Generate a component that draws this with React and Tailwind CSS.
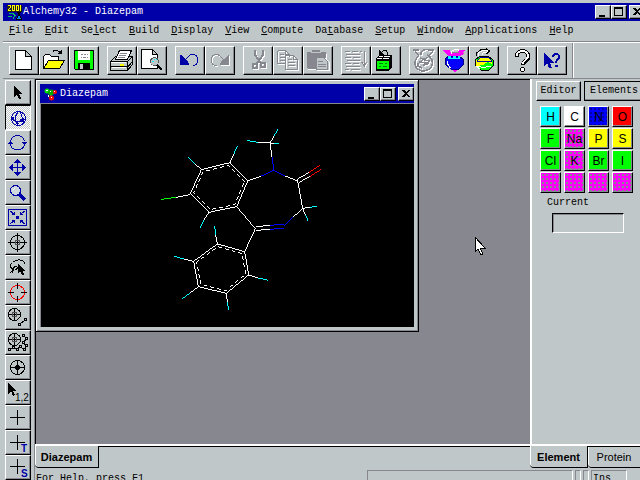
import React from "react";

const raised =
  "flex shrink-0 items-center justify-center border border-t-white border-l-white border-r-black border-b-black bg-[#c0c7c8] shadow-[inset_-1px_-1px_0_#878790]";

function Emboss({ children }) {
  return (
    <>
      <g transform="translate(1 1)" color="#fff">{children}</g>
      <g color="#878790">{children}</g>
    </>
  );
}

const C = "currentColor";
const flask = (
  <path
    d="M4 4h6M19 4h6M6 6l4 3M24 6l-4 3M12 9c-1-5 6-7 9-4M10 10c-4 3-5 7-3 11 3 4 7 5 11 3 5-1 6-6 5-10-1-2-2-4-5-5M11 12l4 1-4 3 6 1-3 3M18 11l-2 3 4 1-2 4M9 17v3l4 2"
    fill="none" stroke={C} strokeWidth="1.500"
  />
);

const bigIcons = {
  New: (
    <path d="M6.500 4.500h10l6 6v13h-16zM16.500 4.500v6h6" fill="#fff" stroke="#000" />
  ),
  Open: (
    <>
      <path d="M4.500 22.500v-12l2-2h4l2 2h7v4" fill="#fff" stroke="#000" />
      <path d="M4.500 22.500l5-8h16l-5 8z" fill="#ff0" stroke="#000" />
      <path d="M13.500 6.500c1-3 6-3 8 1" fill="none" stroke="#000" />
      <path d="M18 8h5V3z" />
    </>
  ),
  Save: (
    <>
      <path d="M5.500 4.500h19v19h-18l-1-1z" fill="#0f0" stroke="#000" />
      <path d="M9 5h12v9H9z" fill="#fff" />
      <path d="M12 8.500h2m1 0h2m1 0h1M12 11.500h1m1 0h3m1 0h1" stroke="#878790" />
      <path d="M9 17h12v7H9z" />
      <path d="M11 18h3v5h-3z" fill="#c0c7c8" />
    </>
  ),
  Print: (
    <>
      <path d="M3.500 15.500l5-5h17v8l-5 6h-17z" fill="#c0c7c8" stroke="#000" />
      <path d="M8.500 13.500l4-9h12l-4 9z" fill="#fff" stroke="#000" />
      <path d="M13 7.500h7m-8 2h7m-8 2h7" stroke="#878790" />
      <path d="M3.500 15.500h17v9M20.500 15.500l5-5M3.500 20.500h17M20.500 21.500l5-6" fill="none" stroke="#000" />
      <path d="M4 16h15v1H4zM5 21h14v1H5z" fill="#fff" />
      <path d="M13 18h4v2h-4z" fill="#ff0" />
    </>
  ),
  Preview: (
    <>
      <path d="M4.500 3.500h11l5 5v14h-16zM15.500 3.500v5h5" fill="#fff" stroke="#000" />
      <circle cx="17.500" cy="15.500" r="4" fill="#c0c7c8" stroke="#555" />
      <path d="M15 15h2v-2h1v1h-1v2h-2zM19 13h1v1h-1z" fill="#0ff" />
      <path d="M20 19l5 5" stroke="#000" strokeWidth="2" />
    </>
  ),
  Undo: (
    <>
      <path d="M10.500 13.500l4-4c4-3 8.500 0 8 5 0 3-2 5-5 5" fill="none" stroke="#0000a8" />
      <path d="M5 9h1l4 4 2 1 2 4v1H5z" fill="#0000a8" />
    </>
  ),
  Redo: (
    <Emboss>
      <path d="M18.500 13.500l-4-4c-4-3-8.500 0-8 5 0 3 2 5 5 5" fill="none" stroke={C} />
      <path d="M24 9h-1l-4 4-2 1-2 4v1h9z" fill={C} />
    </Emboss>
  ),
  Cut: (
    <Emboss>
      <path d="M12 4v5l6 8M20 4v5l-6 8" fill="none" stroke={C} strokeWidth="2" />
      <circle cx="12" cy="20" r="2.500" fill="none" stroke={C} strokeWidth="2" />
      <circle cx="20" cy="19" r="2.500" fill="none" stroke={C} strokeWidth="2" />
    </Emboss>
  ),
  Copy: (
    <Emboss>
      <path
        d="M4.500 4.500h8l4 4v2M4.500 4.500v13h8M12.500 4.500v4h4M7 8.500h4M7 11.500h5M7 14.500h5M12.500 9.500h8l4 4v10h-12zM20.500 9.500v4h4M15 13.500h4M15 16.500h7M15 19.500h7"
        fill="none" stroke={C}
      />
    </Emboss>
  ),
  Paste: (
    <>
      <path d="M23 8h1v5h-1zM5 23h8v1H5z" fill="#fff" />
      <path d="M4 6h5V4h8v2h6v8H13v9H5l-1-2z" fill="#878790" />
      <path d="M8 6.500h10" stroke="#c0c7c8" />
      <path d="M14.500 12.500h8l4 4v8h-12z" fill="none" stroke="#fff" />
      <path d="M13.500 11.500h7l4 4v8h-11z" fill="#c0c7c8" stroke="#878790" />
      <path d="M15 15.500h5M15 18.500h8M15 20.500h8" stroke="#878790" />
    </>
  ),
  Sequence: (
    <Emboss>
      <path d="M4 5.500h5m2 0h6m2 0h2M5 8.500h14M4 11.500h6m2 0h7M6 14.500h13M4 17.500h6m2 0h6M5 20.500h14M4 23.500h4m2 0h9M23.500 5v15m-3-4l3 4 2-4" fill="none" stroke={C} />
    </Emboss>
  ),
  Library: (
    <>
      <path d="M5 13l3-4h13v12l-3 4H5z" fill="#000" />
      <path d="M6 12h5v1H6zM12 12h6v1h-6zM8 10h4v1H8zM13 10h6v1h-6z" fill="#fff" />
      <path d="M5.500 14.500h13v9h-13z" fill="#0f0" stroke="#000" />
      <path d="M8 17.500h4m2 0h2M8 20.500h2m2 0h4" stroke="#008000" />
      <path d="M10.500 6.500c2-3 6-3 6 2" fill="none" stroke="#000" />
      <path d="M8 4v5h5z" />
    </>
  ),
  "Flask off": <Emboss>{flask}</Emboss>,
  "Blue flask": (
    <>
      <path d="M3 4h8v2h8V4h7l-3 3h3l-3 2-3 1H9zM14 24h4l-2 3z" fill="#f0f" />
      <path d="M6 13l4-3h10l4 3v6l-4 4-6 1-5-3-3-4z" fill="#00f" stroke="#000080" />
      <path d="M9 10h3v2h2v-2h3v2h2v-2h2v3H9z" fill="#0ff" />
      <path d="M12.500 8.500c-2-4 5-6 8-4M8.500 15v3l3 4" fill="none" stroke="#fff" />
      <path d="M13 6.500h7" stroke="#878790" />
    </>
  ),
  "Green flask": (
    <>
      <path d="M6 14l5-4h8l5 4v6l-4 4-6 1-5-3-3-4z" fill="#0f0" stroke="#000" />
      <path d="M7 14h16v4l-4-2-5 3-7 1z" fill="#ff0" />
      <path d="M8.500 14.500l3-3h8l3 3v1h-14z" fill="#ff0" stroke="#0000a8" />
      <path d="M9.500 10.500c-2-4 3-6 8-6.500l2 1.500-2 1h-3l-2 3M7 20l5 1h5l5-1M8 21l3 2" fill="none" stroke="#fff" />
      <path d="M7.500 10v-3l4-3 6-1 3 2-3 3" fill="none" stroke="#000" />
    </>
  ),
  Help: (
    <>
      <path d="M9.500 11c0-8 12-8 12 0 0 4-5.500 4-5.500 8" fill="none" stroke="#000" strokeWidth="4" />
      <path d="M9.500 10c0-6 11.500-7 11.500 0 0 4-5 4-5 8" fill="none" stroke="#fff" strokeWidth="2" />
      <circle cx="15.500" cy="23.500" r="2" fill="#fff" stroke="#000" />
    </>
  ),
  "Context help": (
    <>
      <path d="M7 7v13l3-3 2 5h3l-2-5h4z" fill="#0000a8" />
      <path d="M16 11c0-4 6-4 6 0 0 3-3 2-3 6" fill="none" stroke="#0000a8" strokeWidth="2" />
      <path d="M18 19h3v2h-3z" fill="#0000a8" />
    </>
  ),
};

const groups = [
  ["New", "Open", "Save"],
  ["Print", "Preview"],
  ["Undo", "Redo"],
  ["Cut", "Copy", "Paste"],
  ["Sequence", "Library"],
  ["Flask off", "Blue flask", "Green flask"],
  ["Help", "Context help"],
];

const B = "#0000a8";
const K = "#000";
const tools = [
  ["Select", <path d="M9 6v11l3-2 2 4h2v-1l-2-4h3z" />],
  ["Trackball", (
    <g fill="none" stroke={B}>
      <circle cx="13.500" cy="13.500" r="7" />
      <path d="M6.500 13.500c3 4 11 4 14 0M13.500 6.500c-4 4-4 10 0 14M14.500 6.500c3 3 3 8 2 10" />
      <path d="M6 12h2v2H6zM15 15l3-1v3zM11 16v2h2z" fill={B} />
    </g>
  )],
  ["Rotate", (
    <g fill="none" stroke={B}>
      <path d="M5.500 11.500c1-8 13-8 14 0M5.500 14.500c1 7 13 7 14 0" />
      <path d="M3 14l2.500-3 2.500 3zM17 12l2.500 3 2.500-3z" fill={B} stroke="none" />
    </g>
  )],
  ["Move", (
    <g>
      <path d="M12.500 5v15M5 12.500h15" stroke={B} />
      <path d="M9 8l3.500-4L16 8zM9 17l3.500 4 3.500-4zM8 9l-4 3.500L8 16zM17 9l4 3.500-4 3.500z" fill={B} />
    </g>
  )],
  ["Zoom", (
    <g stroke={B} fill="none">
      <circle cx="10.500" cy="10.500" r="5" fill="#cfd8dc" />
      <path d="M14 14l6 6" strokeWidth="3" />
      <path d="M8 10l2-2" stroke="#fff" />
    </g>
  )],
  ["Fit", (
    <g stroke={B} fill="none">
      <path d="M3.500 4.500h18v16h-18z" />
      <path d="M5 6l4 3M20 6l-4 3M5 19l4-3M20 19l-4-3" />
      <path d="M9.500 7v2.500H7M15.500 7v2.500H18M9.500 18v-2.500H7M15.500 18v-2.500H18" />
      <path d="M11 11h3v3h-3z" fill={B} stroke="none" />
    </g>
  )],
  ["Center", (
    <g stroke={K} fill="none">
      <circle cx="12.500" cy="12.500" r="7" />
      <path d="M12.500 3v19M3 12.500h19" />
      <path d="M10.500 10.500h4v4h-4z" stroke="#555" />
    </g>
  )],
  ["Lasso", (
    <g stroke={K} fill="none">
      <path d="M9.500 14.500c-5-1-5-5-2-7 4-4 12-3 12 1M9.500 14.500c3 0 4-2 2-3-2 0-4 2-4 6M5 18l4-3" />
      <path d="M13 9v9l2-2 2 4h2l-1-4h2z" fill={K} stroke="none" />
    </g>
  )],
  ["Red target", (
    <g stroke={K} fill="none">
      <circle cx="12.500" cy="12.500" r="7" stroke="#f00" />
      <path d="M12.500 3v6M12.500 16v6M3 12.500h6M16 12.500h6" />
    </g>
  )],
  ["Bond", (
    <g stroke={K} fill="none">
      <circle cx="9.500" cy="9.500" r="6" />
      <path d="M9.500 3v13M3 9.500h13M15 19l5-4" />
      <path d="M7.500 7.500h4v4h-4z" stroke="#555" />
      <circle cx="14.500" cy="19.500" r="1" /><circle cx="20.500" cy="14.500" r="1" />
    </g>
  )],
  ["Fragment", (
    <g stroke={K} fill="none">
      <circle cx="9.500" cy="9.500" r="6" />
      <path d="M9.500 3v13M3 9.500h13M4 19.500l4-2 4 2 3-3 4 3 2-3-2-4 2-4-2-3" />
      <path d="M7.500 7.500h4v4h-4z" stroke="#555" />
      <g fill="#c0c7c8">
        <circle cx="4.500" cy="19.500" r="1" /><circle cx="8.500" cy="17.500" r="1" /><circle cx="12.500" cy="19.500" r="1" />
        <circle cx="15.500" cy="16.500" r="1" /><circle cx="19.500" cy="19.500" r="1" /><circle cx="21.500" cy="15.500" r="1" />
        <circle cx="18.500" cy="12.500" r="1" /><circle cx="21.500" cy="8.500" r="1" /><circle cx="18.500" cy="5.500" r="1" />
      </g>
    </g>
  )],
  ["Atom center", (
    <g stroke={K} fill="none">
      <circle cx="12.500" cy="12.500" r="7" />
      <path d="M12.500 5v15M5 12.500h15" />
      <circle cx="12.500" cy="12.500" r="2" fill={K} />
    </g>
  )],
  ["Number", (
    <g>
      <path d="M3 2v12l3-3 2 5 2-1-2-4h3z" />
      <text x="10" y="21" className="font-['Liberation_Sans'] text-[10px]">1,2</text>
    </g>
  )],
  ["Cross", <path d="M12.500 5v15M5 12.500h15" stroke={K} />],
  ["Cross T", (
    <g>
      <path d="M12.500 5v15M5 12.500h15" stroke={K} />
      <text x="16" y="22" fill={B} className="font-['Liberation_Sans'] text-[10px] font-bold">T</text>
    </g>
  )],
  ["Cross S", (
    <g>
      <path d="M12.500 4v15M5 11.500h15" stroke={K} />
      <text x="16" y="22" fill={B} className="font-['Liberation_Sans'] text-[10px] font-bold">S</text>
    </g>
  )],
];

const menus = [
  ["", "F", "ile"], ["", "E", "dit"], ["Se", "l", "ect"], ["", "B", "uild"],
  ["", "D", "isplay"], ["", "V", "iew"], ["", "C", "ompute"], ["Da", "t", "abase"],
  ["", "S", "etup"], ["", "W", "indow"], ["", "A", "pplications"], ["", "H", "elp"],
];

function WindowButtons() {
  const marks = [
    ["Minimize", <path key="m" d="M3 9h6v2H3z" />],
    ["Maximize", <path key="x" d="M2 1h9v9H2zM3 3v6h7V3z" fillRule="evenodd" />],
    ["Close", <path key="c" d="M3 2h2l2 2 2-2h2L8 5.500 11 9H9L7 7 5 9H3l3-3.500z" />],
  ];
  return (
    <div className="flex shrink-0">
      {marks.map(([name, mark]) => (
        <button key={name} aria-label={name} className={`${raised} h-[14px] w-4 ${name === "Close" ? "ml-[2px]" : ""}`}>
          <svg viewBox="0 0 14 12" className="h-3 w-[14px]" shapeRendering="crispEdges">{mark}</svg>
        </button>
      ))}
    </div>
  );
}

const ringA = [[293, 213], [240, 158], [154, 179], [121, 251], [177, 307], [260, 290]];
const ringB = [[284, 425], [202, 402], [131, 454], [145, 530], [229, 550], [296, 495]];

// Bonds that change colour half way: start, middle, end, colour of the far half.
const split = [
  [240, 158, 251, 133, 262, 109, "#0ff"], [154, 179, 135, 161, 115, 142, "#0ff"],
  [121, 254, 78, 262, 34, 268, "#0f0"], [177, 307, 161, 331, 151, 354, "#0ff"],
  [293, 213, 332, 199, 372, 181, "#00f"], [360, 99, 366, 142, 372, 181, "#00f"],
  [360, 99, 373, 77, 385, 56, "#0ff"], [360, 99, 324, 97, 292, 92, "#0ff"],
  [360, 99, 372, 100, 386, 100, "#0ff"], [443, 213, 406, 198, 372, 181, "#00f"],
  [441, 208, 476, 188, 509, 166, "#f00"], [446, 218, 480, 199, 514, 178, "#f00"],
  [458, 295, 480, 292, 502, 289, "#0ff"], [458, 295, 466, 314, 475, 334, "#0ff"],
  [458, 295, 430, 321, 403, 347, "#00f"], [318, 350, 360, 346, 401, 343, "#00f"],
  [318, 361, 360, 358, 401, 355, "#00f"], [202, 402, 197, 374, 194, 349, "#0ff"],
  [131, 454, 102, 447, 72, 439, "#0ff"], [145, 530, 120, 549, 97, 566, "#0ff"],
  [229, 550, 232, 575, 236, 601, "#0ff"], [296, 495, 325, 504, 355, 511, "#0ff"],
];

const toPoints = (ring) => ring.map((p) => p.join(",")).join(" ");
function inner(ring) {
  const cx = ring.reduce((s, p) => s + p[0], 0) / 6;
  const cy = ring.reduce((s, p) => s + p[1], 0) / 6;
  return ring.map(([x, y]) => [cx + (x - cx) * 0.89, cy + (y - cy) * 0.89]);
}

function Molecule() {
  return (
    <svg viewBox="0 0 372 223" className="block h-[223px] w-full bg-black" preserveAspectRatio="xMinYMin meet" shapeRendering="crispEdges" role="img" aria-label="Diazepam molecule">
      <g transform="translate(109 6) scale(.33333)" fill="none" stroke="#fff" strokeWidth="3">
        {[ringA, ringB].map((ring, i) => (
          <g key={i}>
            <polygon points={toPoints(ring)} />
            <polygon points={toPoints(inner(ring))} strokeDasharray="12 9" />
          </g>
        ))}
        <path d="M260 290L316 356L284 425M443 213L458 295" />
        {split.map(([x1, y1, x2, y2, x3, y3, color], i) => (
          <g key={i}>
            <path d={`M${x1} ${y1}L${x2} ${y2}`} />
            <path d={`M${x2} ${y2}L${x3} ${y3}`} stroke={color} />
          </g>
        ))}
      </g>
    </svg>
  );
}

const M = "bg-[#f0f] bg-[radial-gradient(#878790_1px,transparent_1px)] bg-[length:4px_4px]";
const elements = [
  ["H", "bg-[#0ff]"], ["C", "bg-white"], ["N", "bg-[#00f] bg-[radial-gradient(#0000a8_1px,transparent_1px)] bg-[length:4px_4px]"], ["O", "bg-[#f00]"],
  ["F", "bg-[#0f0]"], ["Na", M], ["P", "bg-[#ff0]"], ["S", "bg-[#ff0]"],
  ["Cl", "bg-[#0f0]"], ["K", M], ["Br", "bg-[#0f0]"], ["I", "bg-[#0f0]"],
  ["", M], ["", M], ["", M], ["", M],
];

function Balls() {
  return (
    <svg viewBox="0 0 14 14" className="h-[14px] w-[14px] shrink-0">
      <path d="M3 4l4 3 4-2M7 7v4" stroke="#878790" strokeWidth="2" fill="none" />
      <circle cx="3" cy="4" r="2.500" fill="#0d0" /><circle cx="7" cy="5.500" r="3" fill="#00a800" />
      <circle cx="11" cy="5" r="2" fill="#f00" /><circle cx="7.500" cy="11" r="2.500" fill="#f00" />
      <path d="M2 3h2v1H2zM6 4h1v1H6zM7 10h1v1H7zM10 4h1v1h-1zM4 8h1v2H4z" fill="#fff" />
    </svg>
  );
}

function AppIcon() {
  return (
    <svg viewBox="0 0 16 16" className="h-4 w-4 shrink-0" shapeRendering="crispEdges">
      <path d="M0 1h15v7H0z" fill="#222" />
      <path d="M1 1.500h2.500v2l-2 2v1H4M5.500 1.500h2v5h-2zM9.500 1.500h2v5h-2zM13.500 1v6" fill="none" stroke="#ff0" />
      <path d="M2 9.500h4l2 2-2 3M1 12.500h4" stroke="#00c060" fill="none" />
      <path d="M10 8.500h4M11.500 9v2l-2 4h5l-2-4V9" stroke="#000" fill="#08f" />
    </svg>
  );
}

export default function App() {
  return (
    <div className="relative flex h-screen flex-col overflow-hidden bg-[#c0c7c8] pt-[3px] font-['Liberation_Mono','Noto_Sans_CJK_SC',monospace] text-[10px] leading-3 text-black">
      <header className="shrink-0 pl-[3px]">
        <div className="flex h-[18px] items-center bg-[#0000a8] pl-1 text-white">
          <AppIcon />
          <h1 className="flex-1 whitespace-pre">Alchemy32 - Diazepam</h1>
          <div className="-mr-[5px]"><WindowButtons /></div>
        </div>
        <nav className="flex h-[21px] items-center gap-3 border-b border-[#878790] pl-[6px]">
          {menus.map(([a, b, c]) => (
            <button key={a + b + c}>{a}<u>{b}</u>{c}</button>
          ))}
        </nav>
        <div className="flex border-t border-b border-t-white border-b-[#878790]">
          <div className="flex gap-2 border-r border-[#878790] py-[3px] pl-[6px] pr-[5px] shadow-[1px_0_0_white]">
            {groups.map((group) => (
              <div key={group[0]} className="flex">
                {group.map((name) => (
                  <button key={name} aria-label={name} className={`${raised} h-[29px] w-[30px]`}>
                    <svg viewBox="1 1 28 27" className="h-[27px] w-7" shapeRendering="crispEdges">{bigIcons[name]}</svg>
                  </button>
                ))}
              </div>
            ))}
          </div>
        </div>
      </header>

      <div className="flex min-h-0 flex-1">
        <aside className="flex w-[35px] shrink-0 flex-col border-r border-[#878790] pl-[5px] pt-px">
          {tools.map(([name, art], i) => (
            <button
              key={name}
              aria-label={name}
              className={
                i === 1
                  ? "flex h-[25px] w-[26px] shrink-0 items-center justify-center border border-t-black border-l-black border-r-white border-b-white bg-[#eceff0] bg-[conic-gradient(#c0c7c8_25%,#fff_0_50%,#c0c7c8_0_75%,#fff_0)] bg-[length:2px_2px]"
                  : `${raised} h-[25px] w-[26px]`
              }
            >
              <svg viewBox="1 1 24 23" className="h-[23px] w-6" shapeRendering="crispEdges">{art}</svg>
            </button>
          ))}
        </aside>

        <div className="flex min-w-0 flex-1 flex-col">
          <div className="flex min-h-0 flex-1">
            <main className="min-w-0 flex-1 border-t border-l border-black bg-[#878790]">
              <section className="w-[383px] border-r border-b border-black bg-[#c0c7c8] p-1 shadow-[inset_1px_1px_0_white,inset_-1px_-1px_0_#878790]">
                <div className="flex h-[19px] items-center gap-[2px] bg-[#0000a8] pl-1 text-white">
                  <Balls />
                  <h2 className="flex-1">Diazepam</h2>
                  <WindowButtons />
                </div>
                <div className="border-t border-l border-[#878790]"><Molecule /></div>
              </section>
            </main>
            <aside className="w-[110px] shrink-0 overflow-hidden border-l-2 border-white pl-1">
              <div className="flex gap-[3px] pt-[2px]">
                <button className={`${raised} h-5 w-[45px]`}>Editor</button>
                <button className={`${raised} h-5 w-[60px] outline outline-black -outline-offset-1`}>Elements</button>
              </div>
              <div className="mt-[5px] grid w-fit grid-cols-4 gap-x-[3px] gap-y-px pl-1 font-['Liberation_Sans',sans-serif] text-[12px]">
                {elements.map(([name, fill], i) => (
                  <button key={i} aria-label={name || "Other element"} className={`flex h-[21px] w-[21px] items-center justify-center border border-t-white border-l-white border-r-black border-b-black shadow-[inset_-1px_-1px_0_#878790] ${fill}`}>
                    {name}
                  </button>
                ))}
              </div>
              <label htmlFor="current" className="mt-1 block pl-[11px]">Current</label>
              <input id="current" readOnly className="mt-1 ml-4 block h-5 w-[72px] border border-t-black border-l-black border-r-white border-b-white bg-[#c0c7c8] shadow-[inset_1px_1px_0_#878790] outline-none" />
            </aside>
          </div>

          <div className="flex h-6 shrink-0 border-t-2 border-white font-['Liberation_Sans',sans-serif] text-[11px]">
            <button className="h-[22px] w-16 rounded-bl-[4px] border-r border-b border-black font-bold shadow-[inset_1px_0_0_white]">Diazepam</button>
            <div className="flex-1 border-t border-black" />
            <button className="h-[22px] w-[58px] rounded-bl-[4px] border-r border-b border-black font-bold shadow-[inset_1px_0_0_white]">Element</button>
            <button className="h-[22px] w-[52px] rounded-bl-[4px] border-t border-b border-black shadow-[inset_1px_0_0_white]">Protein</button>
          </div>

          <footer className="mt-[2px] flex h-[10px] shrink-0 gap-[2px] pr-[13px]">
            <p className="flex-1 whitespace-pre pl-px pt-[3px]">For Help, press F1</p>
            <div className="h-4 w-[206px] border border-[#878790] border-r-white" />
            <div className="h-4 w-[6px] border border-[#878790] border-r-white" />
            <div className="h-4 w-[6px] border border-[#878790] border-r-white" />
            <div className="h-4 w-9 border border-[#878790] border-r-white pl-px pt-[2px]">Ins</div>
          </footer>
        </div>
      </div>

      <svg viewBox="0 0 12 20" className="pointer-events-none absolute left-[474px] top-[236px] h-5 w-3" shapeRendering="crispEdges">
        <path d="M1 1v15l3-3 3 6 2-1-3-6h5z" fill="#fff" stroke="#000" />
      </svg>
    </div>
  );
}
